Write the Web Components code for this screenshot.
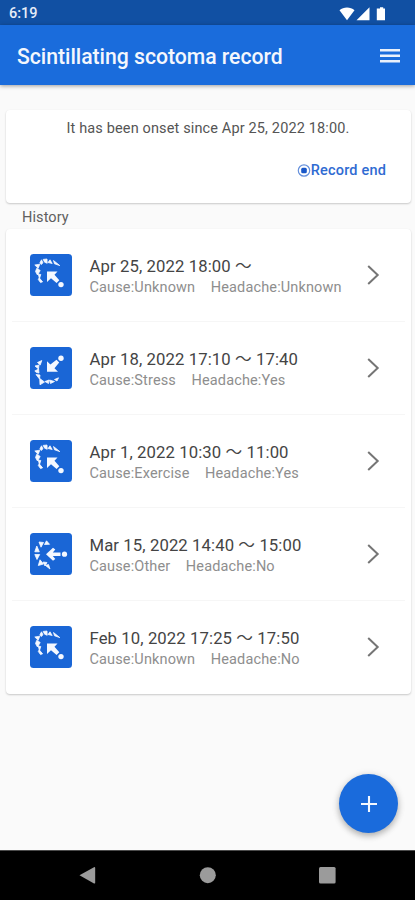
<!DOCTYPE html>
<html lang="en">
<head>
<meta charset="utf-8">
<title>Scintillating scotoma record</title>
<style>
html, body { margin: 0; height: 100%; }
body { font-family: Roboto, "Noto Sans CJK JP", sans-serif; background: #fafafa; color: #555; overflow: hidden; }
</style>
</head>
<body>
<record-app></record-app>
<script>
const define = (name, html, setup) => customElements.define(name, class extends HTMLElement {
  connectedCallback() {
    if (this.shadowRoot) return;
    const root = this.attachShadow({ mode: 'open' });
    root.innerHTML = html;
    if (setup) setup(this, root);
  }
});

define('status-bar', `
<style>
:host { display: flex; height: 25px; box-sizing: border-box; background: #1150a3; color: #e6edf8; align-items: center; justify-content: space-between; padding: 3px 27px 0 9px; font-size: 14.5px; font-weight: 500; line-height: 16px; }
svg { display: block; }
</style>
<span>6:19</span>
<svg width="50" height="16" viewBox="0 0 50 16" fill="#fff">
  <path d="M1.500 4.200C5.500 .7 12.500 .7 16.500 4.200L9 14.200Z"/>
  <path d="M31.500 1.200V14.300H18.500Z"/>
  <path d="M40.500 2.600H42V1.300H45.200V2.600H47V14.300H38.800V2.600Z"/>
</svg>`);

define('app-bar', `
<style>
:host { display: flex; height: 60px; box-sizing: border-box; background: #1a6cdc; color: #f4f7fd; align-items: center; justify-content: space-between; padding: 1px 15px 0 17px; box-shadow: 0 1px 4px rgba(0,0,0,.38); position: relative; z-index: 1; }
h1 { margin: 0; padding-top: 2px; font-size: 21.2px; line-height: 26px; font-weight: 500; white-space: nowrap; letter-spacing: -.02px; }
svg { display: block; }
</style>
<h1><slot></slot></h1>
<svg width="20" height="16" viewBox="0 0 20 16" fill="#e9f0fb"><path d="M0 1h20v2.500H0zM0 6.500h20v2.500H0zM0 12h20v2.500H0z"/></svg>`);

define('paper-card', `
<style>
:host { display: block; margin: 0 4px 0 6px; background: #fff; border-radius: 4px; box-shadow: 0 1px 2px rgba(0,0,0,.2), 0 0 1px rgba(0,0,0,.04); }
</style><slot></slot>`);

define('onset-panel', `
<style>
:host { display: flex; flex-direction: column; height: 93px; box-sizing: border-box; padding: 9px 25px 0 24px; }
p { margin: 0; text-align: center; font-size: 14.5px; line-height: 19px; letter-spacing: .14px; white-space: nowrap; }
button { all: unset; align-self: flex-end; display: flex; align-items: center; margin-top: 24px; color: #2f6bd2; font-size: 14.5px; line-height: 18px; font-weight: 500; letter-spacing: .18px; white-space: nowrap; }
svg { display: block; }
</style>
<p>It has been onset since Apr 25, 2022 18:00.</p>
<button><svg width="14" height="14" viewBox="0 0 14 14"><circle cx="7" cy="6.500" r="5.700" fill="none" stroke="#6590dc" stroke-width="1.200"/><rect x="4.200" y="3.700" width="5.600" height="5.600" rx="1.500" fill="#1a58c8"/></svg><span>Record end</span></button>`);

const ICONS = {
  nw: `<path d="M17 17.500H27.500L24.500 20.800L29.300 26.300L26.600 28.900L21 24.300L17 28Z"/><circle cx="31" cy="30.600" r="2.700"/>
<path class="shards" d="M4.800 11L9.800 10.200L8.200 14.200ZM6.800 14.200L10.200 16.500L7.500 21L5.500 17.500ZM8.200 20L10.800 20.500L9.500 24.500ZM9.200 23.800L12.600 27.800L10.500 28.600L8.300 25.500ZM9.800 9L11.500 5.800L13 8.800L11.200 10.500ZM13.200 5.400L17 5L17.200 9.300L14.600 8.200ZM18 8.500L20 5.800L22.200 9.500ZM23.500 6.500L29.800 11.600L24.500 9.800Z"/>`,
  sw: `<path d="M17 24.800V14.300L20.400 17.500L26.500 12.700L29.200 15.400L24.500 21.200L28 24.800Z"/><circle cx="31" cy="11.300" r="2.700"/>
<path class="shards" d="M7.500 15.500L11.800 13.500L10.200 18ZM5 19L9 18L8.500 22ZM4.800 24L8.600 22L9 26L6.500 25.500ZM6 27.500L10 28L9.500 32ZM9.700 31.500L14.500 35L10 37.800ZM15 34.500L19 33L18.500 36.500ZM19.500 33L24.500 34.500L20.500 36.500ZM24.500 32.500L28.500 30.800L27 34Z"/>`,
  w: `<path d="M16 21.200L23 14.800L25.300 16.600L22.800 19.400H30.500V23H22.800L25.300 25.900L23 27.800Z"/><circle cx="34.500" cy="21.200" r="2.600"/>
<path class="shards" d="M9 9L13.500 9.500L11 14.200ZM14.500 11.500L16.500 7.800L19.500 11.300ZM4.800 18.800L6.800 13L9.300 18.800ZM4.800 21.500H9.700L7 26.500ZM8.300 32.500L10 26.800L13.500 31ZM13.200 29L17 29.500L15 33ZM15.500 32.500L18.500 31.500L20 36Z"/>`
};

define('scotoma-icon', `
<style>
:host { display: block; width: 42px; height: 42px; border-radius: 3.500px; background: #1a66d6; }
svg { display: block; }
.shards { stroke: #f4f8ff; stroke-width: .8; stroke-linejoin: round; }
</style><svg width="42" height="42" viewBox="0 0 42 42" fill="#f4f8ff"></svg>`, (el, root) => {
  root.querySelector('svg').innerHTML = ICONS[el.getAttribute('direction')];
});

define('history-item', `
<style>
:host { display: flex; height: 93.200px; box-sizing: border-box; align-items: center; margin: 0 6px; padding: 0 25px 0 18px; border-bottom: 1px solid #f6f6f6; }
:host(:last-child) { border-bottom-color: transparent; }
.text { flex: 1; margin-left: 17.500px; padding-top: 4px; white-space: nowrap; }
.when { font-size: 16.700px; line-height: 22px; letter-spacing: .1px; color: #444; }
.detail { display: flex; gap: 15.500px; font-size: 14.500px; line-height: 20px; letter-spacing: .14px; color: #8e8e8e; }
svg { display: block; }
</style>
<scotoma-icon></scotoma-icon>
<div class="text"><div class="when"><slot></slot></div><div class="detail"><span id="cause"></span><span id="head"></span></div></div>
<svg width="13" height="22" viewBox="0 0 13 22" fill="none" stroke="#757575" stroke-width="2"><path d="M1.200 2L10.700 11L1.200 20"/></svg>`, (el, root) => {
  const icon = document.createElement('scotoma-icon');
  icon.setAttribute('direction', el.getAttribute('direction'));
  root.querySelector('scotoma-icon').replaceWith(icon);
  root.getElementById('cause').textContent = 'Cause:' + el.getAttribute('cause');
  root.getElementById('head').textContent = 'Headache:' + el.getAttribute('headache');
});

define('add-button', `
<style>
:host { position: absolute; right: 17px; bottom: 67px; width: 59px; height: 59px; border-radius: 50%; background: #1a6bdc; display: grid; place-items: center; box-shadow: 0 3px 6px rgba(0,0,0,.25), 0 1px 8px rgba(0,0,0,.1); }
</style><svg width="16" height="16" viewBox="0 0 16 16" stroke="#f4f8ff" stroke-width="2.100"><path d="M0 8H16M8 0V16"/></svg>`);

define('navigation-bar', `
<style>
:host { display: block; height: 50px; background: #000; }
svg { display: block; }
</style>
<svg width="415" height="50" viewBox="0 0 415 50" fill="#9b9b9b"><path d="M0 0H415V1H0Z" fill="#4b4b4b"/><path d="M79.500 25.200L94 17.200Q95.200 16.800 95.200 18V32.500Q95.200 34 94 33.400Z"/><circle cx="207.800" cy="25.200" r="8"/><rect x="319" y="17" width="16.600" height="16.500" rx="1.500"/></svg>`);

define('record-app', `
<style>
:host { display: flex; flex-direction: column; height: 900px; position: relative; background: #fafafa; }
main { flex: 1; padding-top: 25px; }
h2 { margin: 0; padding: 5px 0 0 22px; height: 25.500px; box-sizing: border-box; font-size: 14.500px; line-height: 20px; font-weight: 400; letter-spacing: .1px; color: #606060; }
</style>
<status-bar></status-bar>
<app-bar>Scintillating scotoma record</app-bar>
<main>
<paper-card><onset-panel></onset-panel></paper-card>
<h2>History</h2>
<paper-card>
<history-item direction="nw" cause="Unknown" headache="Unknown">Apr 25, 2022 18:00 〜</history-item>
<history-item direction="sw" cause="Stress" headache="Yes">Apr 18, 2022 17:10 〜 17:40</history-item>
<history-item direction="nw" cause="Exercise" headache="Yes">Apr 1, 2022 10:30 〜 11:00</history-item>
<history-item direction="w" cause="Other" headache="No">Mar 15, 2022 14:40 〜 15:00</history-item>
<history-item direction="nw" cause="Unknown" headache="No">Feb 10, 2022 17:25 〜 17:50</history-item>
</paper-card>
</main>
<add-button></add-button>
<navigation-bar></navigation-bar>`);
</script>
</body>
</html>
